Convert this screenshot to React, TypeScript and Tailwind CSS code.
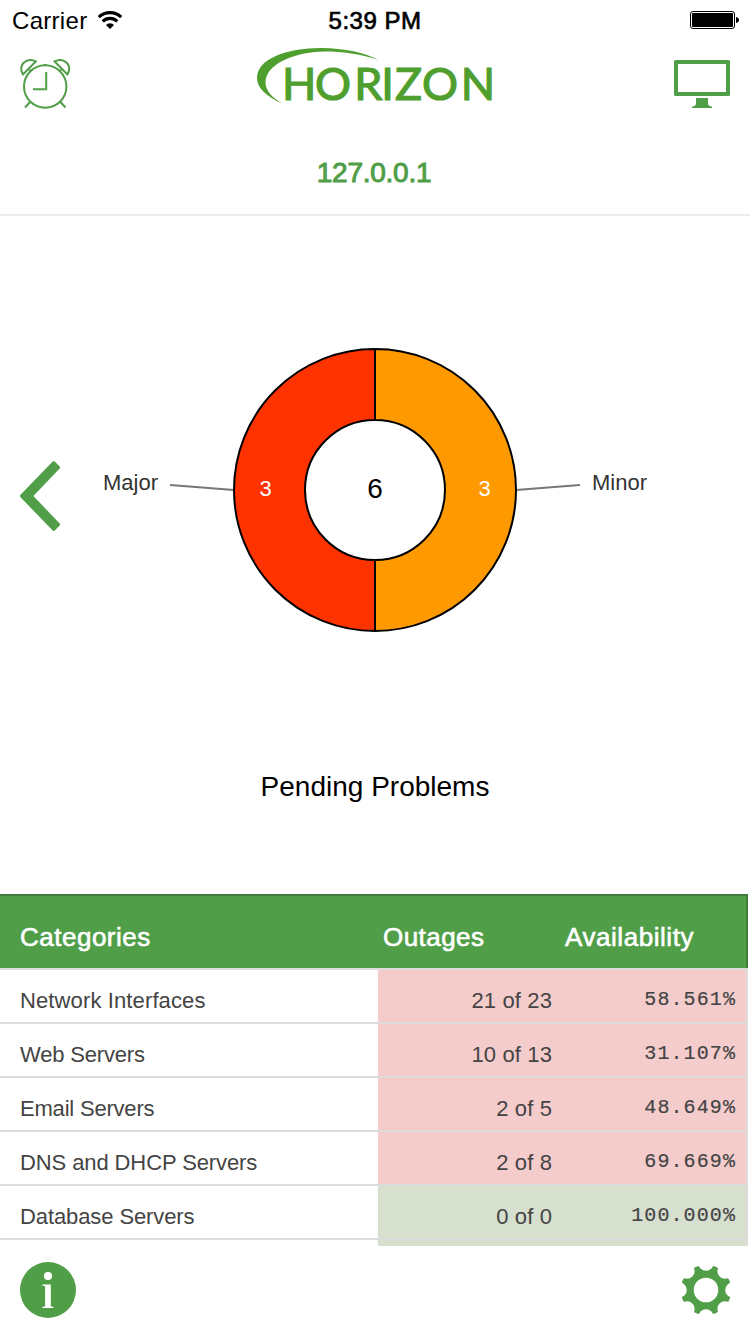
const GREEN = '#509e48';
const LOGO = '#4f9f2f';

type Row = { name: string; outages: string; availability: string; tone: string; tracking: string };

const rows: Row[] = [
  { name: 'Network Interfaces', outages: '21 of 23', availability: '58.561%', tone: 'bg-[#f4cccc]', tracking: 'tracking-[0.12px]' },
  { name: 'Web Servers', outages: '10 of 13', availability: '31.107%', tone: 'bg-[#f4cccc]', tracking: 'tracking-[-0.18px]' },
  { name: 'Email Servers', outages: '2 of 5', availability: '48.649%', tone: 'bg-[#f4cccc]', tracking: 'tracking-[-0.2px]' },
  { name: 'DNS and DHCP Servers', outages: '2 of 8', availability: '69.669%', tone: 'bg-[#f4cccc]', tracking: 'tracking-[-0.1px]' },
  { name: 'Database Servers', outages: '0 of 0', availability: '100.000%', tone: 'bg-[#d7dfce]', tracking: 'tracking-[-0.1px]' },
];

function StatusBar() {
  return (
    <div className="flex h-10 items-center text-[24px] leading-10 text-black">
      <div className="flex flex-1 items-center gap-[10px] pl-3">
        <span className="pt-[2px] leading-[38px] tracking-[0.3px]">Carrier</span>
        <svg width="26" height="20" viewBox="0 0 26 20" fill="none" stroke="#000" strokeWidth="3.1">
          <path d="M1.800 7.200a16 16 0 0 1 22.400 0" />
          <path d="M5.700 11.400a10.300 10.300 0 0 1 14.600 0" />
          <path d="M13 19l-4-4.100a5.700 5.700 0 0 1 8 0z" fill="#000" stroke="none" />
        </svg>
      </div>
      <span className="pt-[2px] pr-[2px] leading-[38px] tracking-[0.5px] [-webkit-text-stroke:0.7px_#000]">5:39 PM</span>
      <div className="flex flex-1 justify-end pr-[10px]">
        <svg width="50" height="20" viewBox="0 0 50 20">
          <rect x="0.5" y="1.5" width="44" height="17" rx="2.5" fill="none" stroke="#000" />
          <rect x="2" y="3" width="41" height="14" rx="1" />
          <path d="M46 7c4 .5 4 5.500 0 6z" />
        </svg>
      </div>
    </div>
  );
}

function AlarmIcon() {
  return (
    <svg width="52" height="54" viewBox="0 0 52 54" fill="none" stroke={GREEN} strokeWidth="2">
      <circle cx="25.200" cy="29.500" r="21.200" />
      <path d="M26.200 15v17.200H13" />
      <path d="M10.500 44.500l-5.500 6M40 44.500l5.500 6M10.800 14.500l-1.500-2M39.600 14.500l1.500-2" />
      <path d="M22.500 8.500q2.700-3.500 5.400 0z" fill={GREEN} stroke="none" />
      <path d="M15.800 4.500C9 .8 1.500 5 1.200 11.500Q1.200 15 3 17.500zM34.600 4.500C41.400 .8 48.900 5 49.200 11.500Q49.200 15 47.400 17.500z" />
    </svg>
  );
}

function Logo() {
  return (
    <svg width="240" height="76" viewBox="255 46 240 76" fill={LOGO}>
      <path d="M282 103.500C266 96 257 88 257 78C257 59 286 48 321 48C345 48 365 53 378 59.800C360 54 342 51.500 325 51.500C292 52 265.500 65 265.500 82.500C265.500 91 273 98 282 103.500Z" />
      <text
        x="282 315 354.200 381.200 395 422 460.800"
        y="99.800"
        fontFamily="Lato, sans-serif"
        fontSize="45"
        stroke={LOGO}
        strokeWidth="1.2"
      >
        HORIZON
      </text>
    </svg>
  );
}

function MonitorIcon() {
  return (
    <svg width="56" height="48" viewBox="0 0 56 48" fill={GREEN}>
      <path fillRule="evenodd" d="M1.500 0h53q1.500 0 1.500 1.500v33q0 1.500-1.500 1.500h-53Q0 36 0 34.500v-33Q0 0 1.500 0zM4 4v28h48V4z" />
      <path d="M22 38h12v5.500q0 2.500 4 3.300V48H18v-1.200q4-.8 4-3.300z" />
    </svg>
  );
}

function Chart() {
  return (
    <svg width="750" height="678" viewBox="0 216 750 678" fontFamily="'Liberation Sans', Arial, sans-serif" textAnchor="middle">
      <path d="M54.700 461.500l5 5q.8 1 0 2L33.400 496l26.300 27.500q.8 1 0 2l-5 5q-1 1-2 0L20.300 497q-.8-1 0-2l32.400-33.500q1-1 2 0z" fill={GREEN} />
      <g fill="none" stroke="#777" strokeWidth="2">
        <path d="M170 485l64 5M580 485l-64 5" />
      </g>
      <g stroke="#000" strokeWidth="2">
        <path d="M375 349a141 141 0 0 1 0 282v-71a70 70 0 0 0 0-140z" fill="#ff9900" />
        <path d="M375 349a141 141 0 0 0 0 282v-71a70 70 0 0 1 0-140z" fill="#ff3300" />
      </g>
      <g fontSize="22">
        <text x="130.500" y="490" fill="#333">Major</text>
        <text x="619.500" y="490" fill="#333">Minor</text>
        <text x="265.500" y="496" fill="#fff">3</text>
        <text x="484.500" y="496" fill="#fff">3</text>
      </g>
      <g fontSize="28">
        <text x="375" y="498">6</text>
        <text x="375" y="796">Pending Problems</text>
      </g>
    </svg>
  );
}

function OutageTable() {
  return (
    <div className="h-[352px] w-[748px] overflow-hidden">
      <div className="flex h-[74px] border-t-2 border-r-2 border-[#427d3c] bg-[#509e48] pt-[11px] text-[26px] leading-[60px] text-white [-webkit-text-stroke:0.6px_#fff]">
        <span className="w-[383px] pl-5 tracking-[0.5px]">Categories</span>
        <span className="w-[182px] tracking-[0.45px]">Outages</span>
        <span className="tracking-[0.55px]">Availability</span>
      </div>
      <div className="border-t-2 border-r-2 border-[#dcdcdc] text-[22px] text-[#444]">
        {rows.map((row) => (
          <div key={row.name} className="flex h-[54px] leading-[61px]">
            <span className={`w-[378px] border-b-2 border-[#dcdcdc] pl-5 ${row.tracking}`}>{row.name}</span>
            <div className={`flex flex-1 border-b-2 border-[#dcdcdc] ${row.tone}`}>
              <span className="w-[174px] text-right tracking-[0.12px]">{row.outages}</span>
              <span className="flex-1 pr-[10px] text-right font-['Liberation_Mono',monospace] text-[20px] leading-[60px] tracking-[1.1px] [-webkit-text-stroke:0.2px_#444]">
                {row.availability}
              </span>
            </div>
          </div>
        ))}
        <div className="ml-[378px] h-[6px] bg-[#d7dfce]" />
      </div>
    </div>
  );
}

function GearIcon() {
  return (
    <svg width="50" height="50" viewBox="-25 -25 50 50">
      <defs>
        <mask id="gear">
          <circle r="25.200" fill="#fff" />
          <circle r="12.300" fill="#000" />
          {[0, 45, 90, 135, 180, 225, 270, 315].map((angle) => (
            <circle key={angle} cx="26.800" cy="0" r="7.600" fill="#000" transform={`rotate(${angle})`} />
          ))}
        </mask>
      </defs>
      <rect x="-25" y="-25" width="50" height="50" fill={GREEN} mask="url(#gear)" />
    </svg>
  );
}

function InfoIcon() {
  return (
    <svg width="56" height="56" viewBox="0 0 56 56">
      <circle cx="28" cy="28" r="28" fill={GREEN} />
      <circle cx="28" cy="14" r="4.100" fill="#fff" />
      <path d="M22.300 22.500H30.800V44.300l2.600.6V46H22.300v-1.100l2.800-.6V24.200l-2.800-.6z" fill="#fff" />
    </svg>
  );
}

export default function App() {
  return (
    <div className="flex h-[1334px] w-[750px] flex-col overflow-hidden bg-white font-['Liberation_Sans',Arial,sans-serif]">
      <StatusBar />
      <header className="flex h-[88px] justify-between pr-5 pl-5">
        <div className="w-14 pt-[17px]"><AlarmIcon /></div>
        <div className="pt-[6px]"><Logo /></div>
        <div className="pt-5"><MonitorIcon /></div>
      </header>
      <div className="h-[88px] border-b-2 border-[#ebebeb] pr-[2px] text-center text-[28px] leading-[90px] tracking-[-0.25px] text-[#509e48] [-webkit-text-stroke:1px_#509e48]">
        127.0.0.1
      </div>
      <Chart />
      <OutageTable />
      <footer className="flex flex-1 items-center justify-between pr-[19px] pl-5">
        <InfoIcon />
        <GearIcon />
      </footer>
    </div>
  );
}
